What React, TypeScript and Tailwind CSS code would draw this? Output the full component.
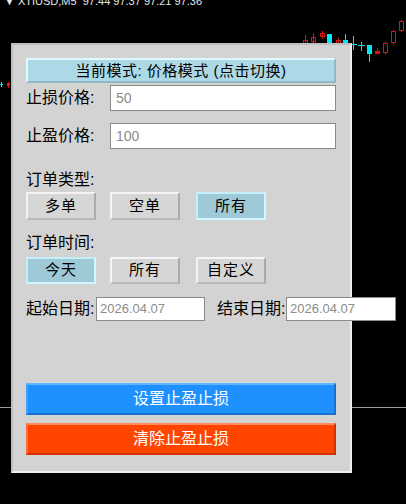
import React from "react";

function TypeBtn({ label, active, className }: { label: string; active?: boolean; className?: string }) {
  return active ? (
    <div
      className={
        "flex h-full w-[70px] shrink-0 items-center justify-center border-2 border-t-[#c6eef8] border-l-[#c6eef8] border-r-[#d2f6ff] border-b-[#d2f6ff] bg-[#9ecad7] text-[15px] tracking-[1px] text-black " +
        (className ?? "")
      }
    >
      {label}
    </div>
  ) : (
    <div
      className={
        "flex h-full w-[70px] shrink-0 items-center justify-center border-2 border-t-[#f4f4f4] border-l-[#f4f4f4] border-r-[#aaaaaa] border-b-[#b8b8b8] bg-[#d6d6d6] text-[15px] tracking-[1px] text-black " +
        (className ?? "")
      }
    >
      {label}
    </div>
  );
}

function Chart() {
  const red = "#d01818";
  const cyan = "#00e8f0";
  return (
    <svg className="absolute left-0 top-0" width={406} height={504} viewBox="0 0 406 504">
      <line x1={0} y1={407.5} x2={406} y2={407.5} stroke="#9a9a9a" strokeWidth={1} />
      <line x1={305.5} y1={35} x2={305.5} y2={44} stroke={red} />
      <rect x={303.5} y={40.5} width={4} height={4} fill="none" stroke={red} />
      <line x1={313.5} y1={33} x2={313.5} y2={44} stroke={red} />
      <rect x={311.5} y={37.5} width={4} height={4} fill="none" stroke={red} />
      <line x1={322.5} y1={31} x2={322.5} y2={39} stroke={red} />
      <rect x={320.5} y={33.5} width={4} height={3} fill="none" stroke={red} />
      <rect x={327} y={34} width={5} height={10} fill={cyan} />
      <line x1={338.5} y1={38} x2={338.5} y2={44} stroke={red} />
      <rect x={336.5} y={40.5} width={4} height={4} fill="none" stroke={red} />
      <line x1={345.5} y1={34} x2={345.5} y2={44} stroke={cyan} />
      <rect x={343} y={40} width={5} height={4} fill={cyan} />
      <line x1={353.5} y1={36} x2={353.5} y2={50} stroke={cyan} />
      <line x1={351} y1={44.5} x2={357} y2={44.5} stroke={cyan} />
      <line x1={361.5} y1={42} x2={361.5} y2={51} stroke={cyan} />
      <line x1={358} y1={45.5} x2={365} y2={45.5} stroke={cyan} />
      <line x1={369.5} y1={45} x2={369.5} y2={62} stroke={cyan} />
      <rect x={367} y={45} width={5} height={9} fill={cyan} />
      <line x1={377.5} y1={48} x2={377.5} y2={54} stroke={red} />
      <rect x={375} y={51} width={5} height={3} fill={red} />
      <line x1={385.5} y1={42} x2={385.5} y2={55} stroke={red} />
      <rect x={383.5} y={43.5} width={4} height={9} fill="#000" stroke={red} />
      <line x1={393.5} y1={30} x2={393.5} y2={44} stroke={red} />
      <rect x={391.5} y={31.5} width={4} height={11} fill="#000" stroke={red} />
      <line x1={401.5} y1={20} x2={401.5} y2={32} stroke={red} />
      <rect x={399.5} y={21.5} width={4} height={9} fill="#000" stroke={red} />
      <line x1={0} y1={84.5} x2={3} y2={84.5} stroke={cyan} />
      <line x1={1.5} y1={82} x2={1.5} y2={87} stroke={cyan} />
      <line x1={8.5} y1={82} x2={8.5} y2={88} stroke={red} />
      <rect x={7.5} y={83.5} width={2} height={2} fill="none" stroke={red} />
    </svg>
  );
}

export default function App() {
  return (
    <div className="relative h-[504px] w-[406px] overflow-hidden bg-black pl-[11px] pt-[43px] font-['Liberation_Sans','Noto_Sans_CJK_SC',sans-serif] text-black">
      <Chart />
      <div className="absolute left-[4px] top-[-5px] whitespace-nowrap text-[11px] leading-[12px] text-[#e6e6e6]">
        ▼ XTIUSD,M5&nbsp;&nbsp;97.44 97.37 97.21 97.36
      </div>

      <div className="relative flex h-[430px] w-[341px] flex-col border-2 border-t-[#bdbdbd] border-l-[#bdbdbd] border-r-[#eeeeee] border-b-[#eeeeee] bg-[#d3d3d3] pl-[13px] pr-[14px] pt-[13px]">
        <div className="flex h-[25px] shrink-0 items-center justify-center border-2 border-t-[#dcfaff] border-l-[#dcfaff] border-r-[#8fb9c7] border-b-[#8fb9c7] bg-[#add8e6] text-[15px] leading-none tracking-[0.5px]">
          当前模式: 价格模式 (点击切换)
        </div>

        <div className="mt-[2px] flex h-[26px] shrink-0 items-center">
          <div className="w-[84px] shrink-0 text-[16px] leading-none">止损价格:</div>
          <div className="flex h-full flex-1 items-center border border-[#8a8a8a] bg-white pl-[5px] text-[14px] text-[#8c8c8c]">
            50
          </div>
        </div>

        <div className="mt-[12px] flex h-[26px] shrink-0 items-center">
          <div className="w-[84px] shrink-0 text-[16px] leading-none">止盈价格:</div>
          <div className="flex h-full flex-1 items-center border border-[#8a8a8a] bg-white pl-[5px] text-[14px] text-[#8c8c8c]">
            100
          </div>
        </div>

        <div className="mt-[21px] flex h-[20px] shrink-0 items-center text-[16px] leading-none">订单类型:</div>
        <div className="mt-[2px] flex h-[28px] shrink-0">
          <TypeBtn label="多单" />
          <TypeBtn label="空单" className="ml-[14px]" />
          <TypeBtn label="所有" active className="ml-[16px]" />
        </div>

        <div className="mt-[13px] flex h-[20px] shrink-0 items-center text-[16px] leading-none">订单时间:</div>
        <div className="mt-[4px] flex h-[27px] shrink-0">
          <TypeBtn label="今天" active />
          <TypeBtn label="所有" className="ml-[14px]" />
          <TypeBtn label="自定义" className="ml-[16px]" />
        </div>

        <div className="mt-[13px] flex h-[24px] shrink-0 items-center whitespace-nowrap">
          <div className="w-[70px] shrink-0 text-[16px] leading-none">起始日期:</div>
          <div className="flex h-full w-[109px] shrink-0 items-center border border-[#8a8a8a] bg-white pl-[3px] text-[13px] text-[#8c8c8c]">
            2026.04.07
          </div>
          <div className="ml-[12px] w-[69px] shrink-0 text-[16px] leading-none">结束日期:</div>
          <div className="flex h-full w-[110px] shrink-0 items-center border border-[#8a8a8a] bg-white pl-[3px] text-[13px] text-[#8c8c8c]">
            2026.04.07
          </div>
        </div>

        <div className="mt-[62px] flex h-[32px] shrink-0 items-center justify-center border-2 border-t-[#62b4ff] border-l-[#3ea2ff] border-r-[#1670d0] border-b-[#1670d0] bg-[#1e90ff] text-[16px] leading-none text-white">
          设置止盈止损
        </div>
        <div className="mt-[8px] flex h-[32px] shrink-0 items-center justify-center border-2 border-t-[#ff8a5a] border-l-[#ff6a36] border-r-[#d03400] border-b-[#d03400] bg-[#ff4500] text-[16px] leading-none text-white">
          清除止盈止损
        </div>
      </div>
    </div>
  );
}
